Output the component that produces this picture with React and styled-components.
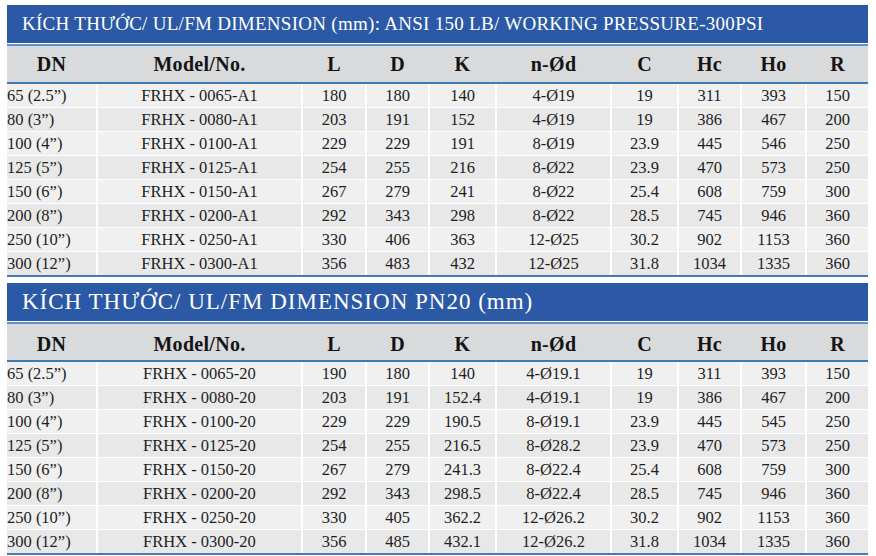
import React from "react";
import styled, { createGlobalStyle } from "styled-components";

const Global = createGlobalStyle`
  html, body { margin: 0; padding: 0; background: #ffffff; }
  body { font-family: "Liberation Serif", "DejaVu Serif", serif; color: #1f1f1f; }
`;

const COLS = "89px 203px 62px 61px 65px 113px 65px 61px 63px 61px";

const Page = styled.div`
  width: 861px;
  padding: 5px 0 0 7px;
  display: flex;
  flex-direction: column;
`;

const Section = styled.section`
  display: flex;
  flex-direction: column;
  margin-bottom: ${(p) => p.$after || 0}px;
`;

const Title = styled.div`
  height: 38px;
  background: #2b59a6;
  color: #ffffff;
  display: flex;
  align-items: center;
  padding-left: 15px;
  font-size: ${(p) => p.$size}px;
  letter-spacing: ${(p) => p.$ls || 0}px;
  white-space: nowrap;
`;

const Rule = styled.div`
  height: 2px;
  background: ${(p) => p.$color};
  margin-top: ${(p) => p.$top || 0}px;
`;

const HeadRow = styled.div`
  display: grid;
  grid-template-columns: ${COLS};
  column-gap: 2px;
  height: ${(p) => p.$h}px;
  background: #d9dadc;
  align-items: center;
  padding-top: ${(p) => p.$pt || 0}px;
  box-sizing: border-box;
`;

const HeadCell = styled.div`
  text-align: center;
  font-weight: bold;
  font-size: 20px;
  letter-spacing: 0.3px;
  color: #141414;
`;

const Body = styled.div`
  display: grid;
  grid-template-columns: ${COLS};
  column-gap: 2px;
  row-gap: 1px;
  background: #ffffff;
`;

const Cell = styled.div`
  height: 23px;
  display: flex;
  align-items: center;
  justify-content: ${(p) => (p.$left ? "flex-start" : "center")};
  background: ${(p) => (p.$alt ? "#e8e8e8" : "#f0f0f0")};
  font-size: 16.5px;
  color: #1e1e1e;
  white-space: nowrap;
`;

const HEAD = ["DN", "Model/No.", "L", "D", "K", "n-Ød", "C", "Hc", "Ho", "R"];

const T1 = [
  ["65 (2.5”)", "FRHX - 0065-A1", "180", "180", "140", "4-Ø19", "19", "311", "393", "150"],
  ["80 (3”)", "FRHX - 0080-A1", "203", "191", "152", "4-Ø19", "19", "386", "467", "200"],
  ["100 (4”)", "FRHX - 0100-A1", "229", "229", "191", "8-Ø19", "23.9", "445", "546", "250"],
  ["125 (5”)", "FRHX - 0125-A1", "254", "255", "216", "8-Ø22", "23.9", "470", "573", "250"],
  ["150 (6”)", "FRHX - 0150-A1", "267", "279", "241", "8-Ø22", "25.4", "608", "759", "300"],
  ["200 (8”)", "FRHX - 0200-A1", "292", "343", "298", "8-Ø22", "28.5", "745", "946", "360"],
  ["250 (10”)", "FRHX - 0250-A1", "330", "406", "363", "12-Ø25", "30.2", "902", "1153", "360"],
  ["300 (12”)", "FRHX - 0300-A1", "356", "483", "432", "12-Ø25", "31.8", "1034", "1335", "360"],
];

const T2 = [
  ["65 (2.5”)", "FRHX - 0065-20", "190", "180", "140", "4-Ø19.1", "19", "311", "393", "150"],
  ["80 (3”)", "FRHX - 0080-20", "203", "191", "152.4", "4-Ø19.1", "19", "386", "467", "200"],
  ["100 (4”)", "FRHX - 0100-20", "229", "229", "190.5", "8-Ø19.1", "23.9", "445", "545", "250"],
  ["125 (5”)", "FRHX - 0125-20", "254", "255", "216.5", "8-Ø28.2", "23.9", "470", "573", "250"],
  ["150 (6”)", "FRHX - 0150-20", "267", "279", "241.3", "8-Ø22.4", "25.4", "608", "759", "300"],
  ["200 (8”)", "FRHX - 0200-20", "292", "343", "298.5", "8-Ø22.4", "28.5", "745", "946", "360"],
  ["250 (10”)", "FRHX - 0250-20", "330", "405", "362.2", "12-Ø26.2", "30.2", "902", "1153", "360"],
  ["300 (12”)", "FRHX - 0300-20", "356", "485", "432.1", "12-Ø26.2", "31.8", "1034", "1335", "360"],
];

function DimTable({ title, size, ls, headPt, rows, after }) {
  return (
    <Section $after={after}>
      <Title $size={size} $ls={ls}>{title}</Title>
      <Rule $color="#5f93c8" $top={1} />
      <HeadRow $h={36} $pt={headPt}>
        {HEAD.map((h) => (
          <HeadCell key={h}>{h}</HeadCell>
        ))}
      </HeadRow>
      <Rule $color="#3f7aae" />
      <Body>
        {rows.map((r, i) =>
          r.map((v, j) => (
            <Cell key={i + "-" + j} $left={j === 0} $alt={i % 2 === 1}>
              {v}
            </Cell>
          ))
        )}
      </Body>
      <Rule $color="#4a78b2" />
    </Section>
  );
}

export default function App() {
  return (
    <>
      <Global />
      <Page>
        <DimTable
          title="KÍCH THƯỚC/ UL/FM DIMENSION (mm): ANSI 150 LB/ WORKING PRESSURE-300PSI"
          size={19}
          ls={0.28}
          headPt={0}
          rows={T1}
          after={6}
        />
        <DimTable
          title="KÍCH THƯỚC/ UL/FM DIMENSION PN20 (mm)"
          size={23}
          ls={1}
          headPt={4}
          rows={T2}
        />
      </Page>
    </>
  );
}
